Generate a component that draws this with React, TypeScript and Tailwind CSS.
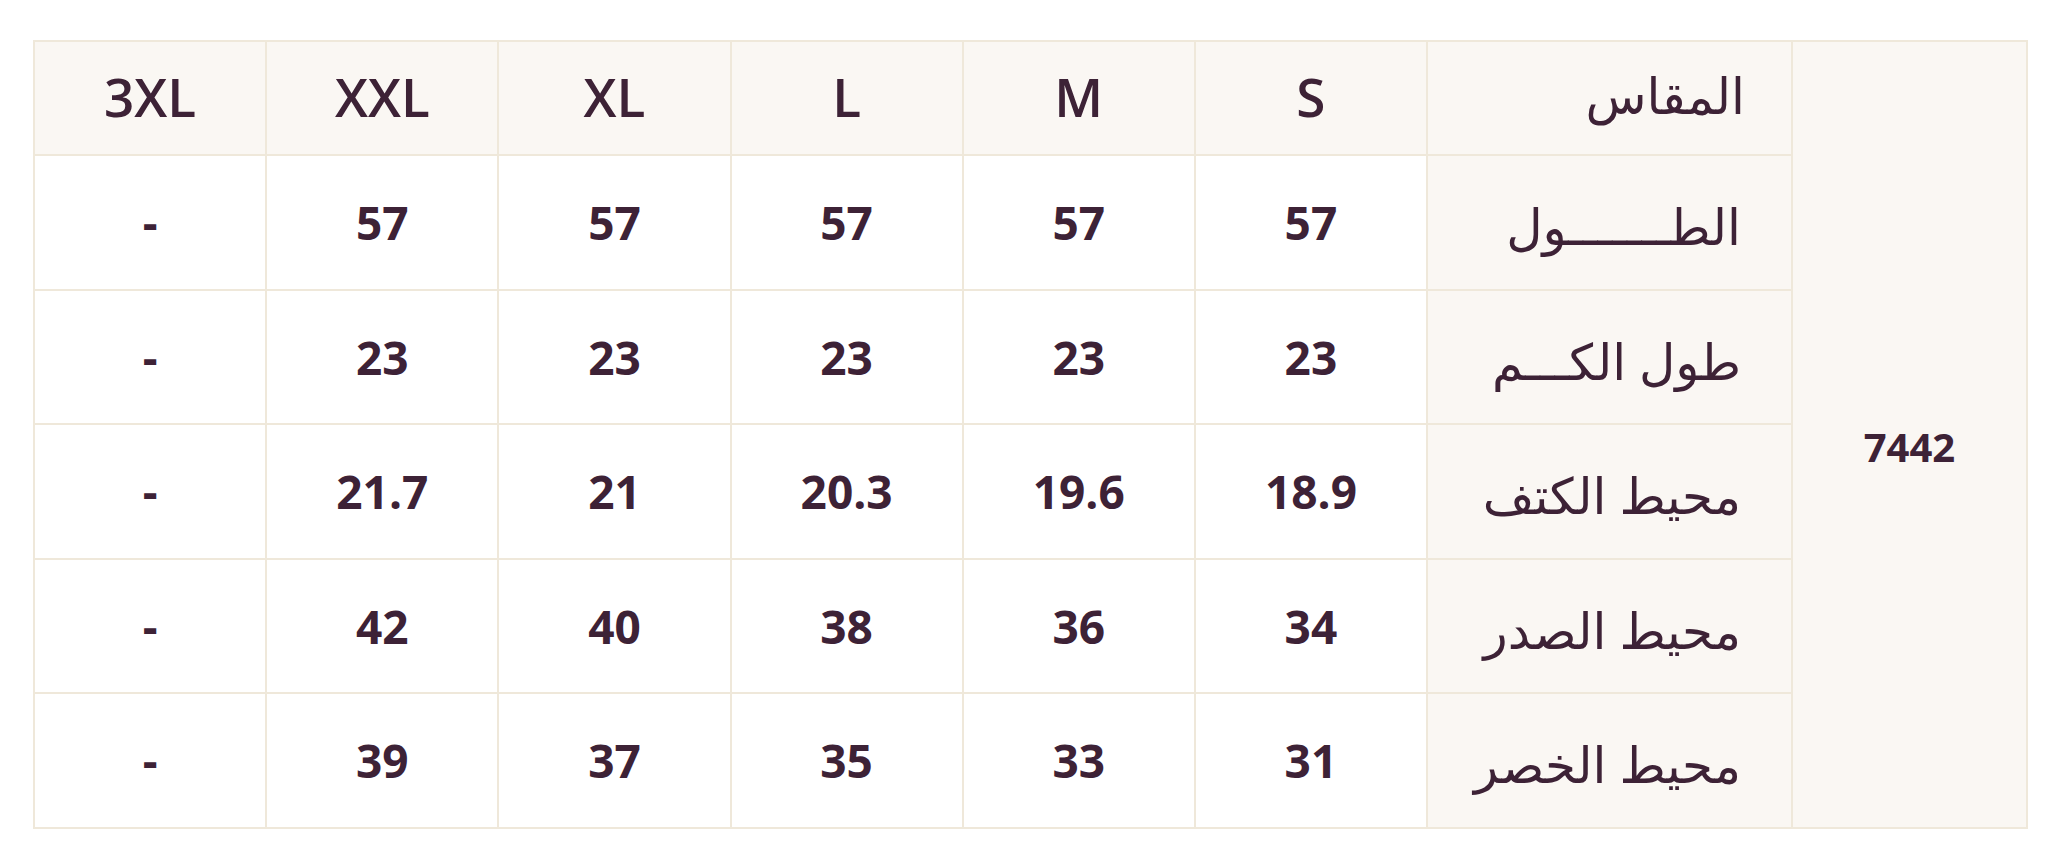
const sizes = ["S", "M", "L", "XL", "XXL", "3XL"];

const rows: { label: string; values: string[] }[] = [
  { label: "الطـــــــول", values: ["57", "57", "57", "57", "57", "-"] },
  { label: "طول الكـــم", values: ["23", "23", "23", "23", "23", "-"] },
  { label: "محيط الكتف", values: ["18.9", "19.6", "20.3", "21", "21.7", "-"] },
  { label: "محيط الصدر", values: ["34", "36", "38", "40", "42", "-"] },
  { label: "محيط الخصر", values: ["31", "33", "35", "37", "39", "-"] },
];

export default function App() {
  return (
    <div
      className="min-h-screen bg-white pt-[40px] pl-[33px] pr-[20px] text-[#3d2236]"
      style={{ fontFamily: '"Open Sans", "Noto Sans", "DejaVu Sans", sans-serif' }}
    >
      <table dir="rtl" className="w-full table-fixed border-collapse border-2 border-[#efe8da]">
        <colgroup>
          <col className="w-[235px]" />
          <col className="w-[365px]" />
          {sizes.map((s) => (
            <col key={s} />
          ))}
        </colgroup>
        <tbody>
          {/* Header row */}
          <tr className="h-[114px] bg-[#faf7f3]">
            <td
              rowSpan={6}
              className="border-2 border-[#efe8da] bg-[#faf7f3] pt-[26px] text-center text-[40px] font-bold"
            >
              7442
            </td>
            <td className="border-2 border-[#efe8da] pr-[46px] pb-[6px] text-right text-[50px] font-medium leading-none">
              المقاس
            </td>
            {sizes.map((s) => (
              <td key={s} className="border-2 border-[#efe8da] pb-[4px] text-center text-[53px] font-semibold leading-none">
                {s}
              </td>
            ))}
          </tr>

          {/* Measurements */}
          {rows.map((r) => (
            <tr key={r.label} className="h-[134.5px]">
              <td className="border-2 border-[#efe8da] bg-[#faf7f3] pr-[50px] pt-[8px] text-right text-[50px] font-medium leading-none">
                {r.label}
              </td>
              {r.values.map((v, i) => (
                <td key={i} className="border-2 border-[#efe8da] bg-white text-center text-[46px] font-bold leading-none">
                  {v}
                </td>
              ))}
            </tr>
          ))}
        </tbody>
      </table>
    </div>
  );
}
